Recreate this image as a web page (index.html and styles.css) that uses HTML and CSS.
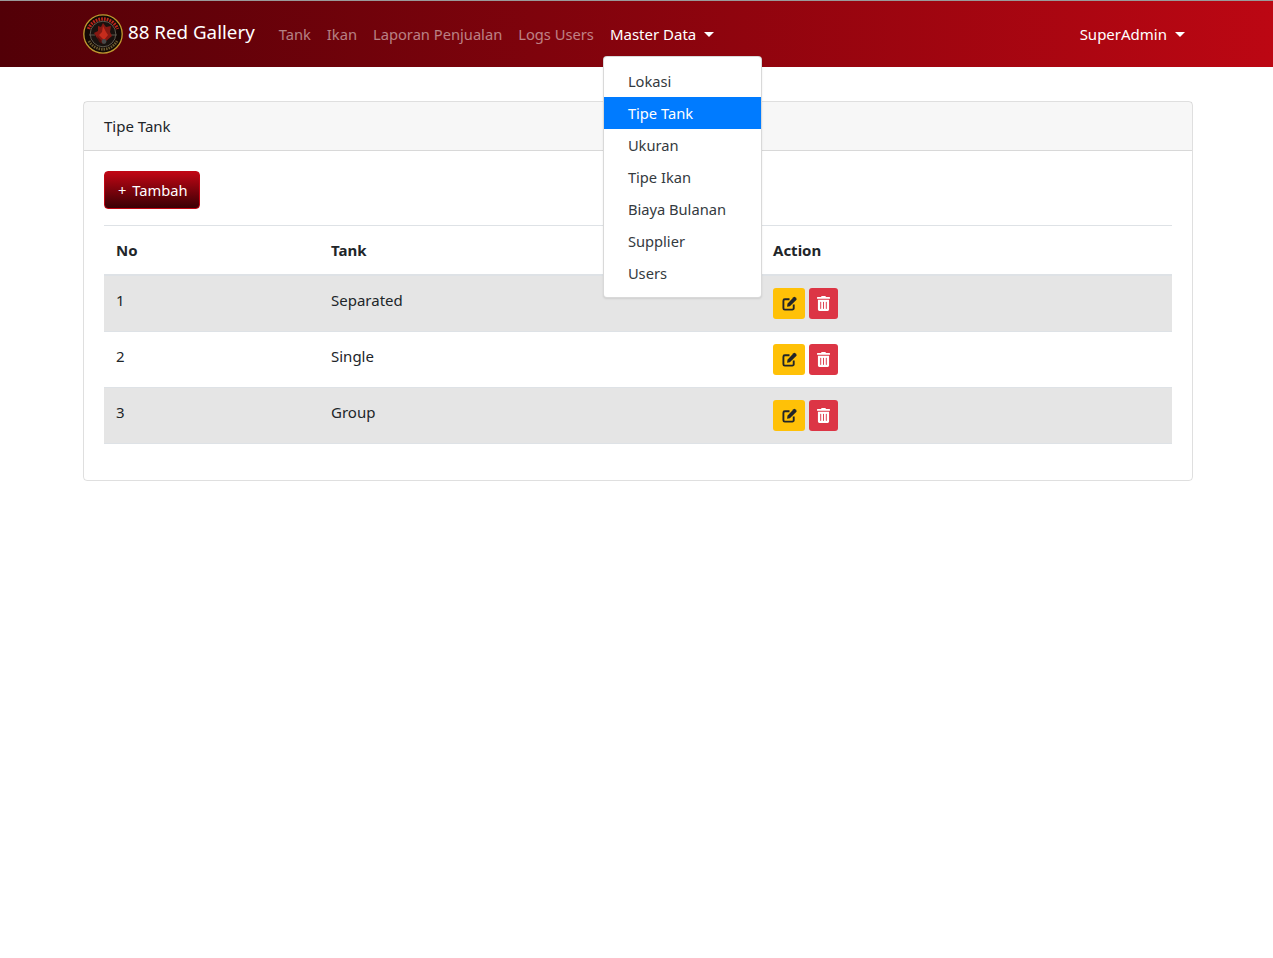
FILE: index.html
```html
<!DOCTYPE html>
<html lang="en">
<head>
    <meta charset="UTF-8">
    <title>Tipe Tank</title>
    <link rel="stylesheet" href="styles.css">
</head>
<body>
    <nav class="navbar">
        <a class="brand" href="#">
            <svg class="brand-logo" viewBox="0 0 40 40">
                <circle cx="20" cy="20" r="19.2" fill="#120805" stroke="#c09a30" stroke-width="1.300"/>
                <path d="M5.500 15a15.500 15.500 0 0 1 29 0" fill="none" stroke="#b8261c" stroke-width="3.400" stroke-dasharray="1.800 1"/>
                <path d="M6 27a16 16 0 0 0 28 0" fill="none" stroke="#6a5a30" stroke-width="2.800" stroke-dasharray="1.500 1"/>
                <circle cx="20" cy="20" r="12.800" fill="#19120f" stroke="#5c574c" stroke-width="1"/>
                <path d="M6 21h6M28 21h6" stroke="#5c574c" stroke-width="1.200"/>
                <path d="M20 9l3 4 5-1-1 6 2 4-6 5-4 1-5-4-3-5 4-2 0-5 3 1z" fill="#861812"/>
                <path d="M20 12l3 6 2 3-4 5-5-5 3-3z" fill="#c62c1c"/>
                <path d="M14 22l5 5 3-2-2 5-4-2z" fill="#500d0a"/>
                <circle cx="21" cy="27.500" r="2.400" fill="#484848"/>
            </svg>
            <span class="brand-name">88 Red Gallery</span>
        </a>
        <ul class="nav-list">
            <li><a class="nav-link" href="#">Tank</a></li>
            <li><a class="nav-link" href="#">Ikan</a></li>
            <li><a class="nav-link" href="#">Laporan Penjualan</a></li>
            <li><a class="nav-link" href="#">Logs Users</a></li>
            <li class="dropdown">
                <a class="nav-link active caret" href="#">Master Data</a>
                <div class="dropdown-menu">
                    <a class="dropdown-item" href="#">Lokasi</a>
                    <a class="dropdown-item selected" href="#">Tipe Tank</a>
                    <a class="dropdown-item" href="#">Ukuran</a>
                    <a class="dropdown-item" href="#">Tipe Ikan</a>
                    <a class="dropdown-item" href="#">Biaya Bulanan</a>
                    <a class="dropdown-item" href="#">Supplier</a>
                    <a class="dropdown-item" href="#">Users</a>
                </div>
            </li>
        </ul>
        <a class="nav-link active caret" href="#">SuperAdmin</a>
    </nav>

    <main class="container">
        <section class="card">
            <div class="card-header">Tipe Tank</div>
            <div class="card-body">
                <a class="btn-add" href="#">+ Tambah</a>
                <table class="table">
                    <thead>
                        <tr>
                            <th class="col-no">No</th>
                            <th class="col-tank">Tank</th>
                            <th>Action</th>
                        </tr>
                    </thead>
                    <tbody>
                        <tr class="odd">
                            <td>1</td>
                            <td>Separated</td>
                            <td>
                                <div class="actions">
                                    <a class="btn-icon edit" href="#"><svg viewBox="0 0 16 16"><use href="#ico-edit"/></svg></a>
                                    <a class="btn-icon del" href="#"><svg viewBox="0 0 448 512"><use href="#ico-trash"/></svg></a>
                                </div>
                            </td>
                        </tr>
                        <tr>
                            <td>2</td>
                            <td>Single</td>
                            <td>
                                <div class="actions">
                                    <a class="btn-icon edit" href="#"><svg viewBox="0 0 16 16"><use href="#ico-edit"/></svg></a>
                                    <a class="btn-icon del" href="#"><svg viewBox="0 0 448 512"><use href="#ico-trash"/></svg></a>
                                </div>
                            </td>
                        </tr>
                        <tr class="odd">
                            <td>3</td>
                            <td>Group</td>
                            <td>
                                <div class="actions">
                                    <a class="btn-icon edit" href="#"><svg viewBox="0 0 16 16"><use href="#ico-edit"/></svg></a>
                                    <a class="btn-icon del" href="#"><svg viewBox="0 0 448 512"><use href="#ico-trash"/></svg></a>
                                </div>
                            </td>
                        </tr>
                    </tbody>
                </table>
            </div>
        </section>
    </main>

    <svg class="sprites" width="0" height="0">
        <symbol id="ico-edit" viewBox="0 0 16 16">
            <path fill="none" stroke="currentColor" stroke-width="2" stroke-linejoin="round" d="M8 3.500H3a1.500 1.500 0 0 0-1.500 1.500v8a1.500 1.500 0 0 0 1.500 1.500h8a1.500 1.500 0 0 0 1.500-1.500V9"/>
            <path fill="currentColor" d="M12.300 1.300a1.300 1.300 0 0 1 1.800 0l1.100 1.100a1.300 1.300 0 0 1 0 1.800L8.400 11l-3 .4.400-3.100z"/>
        </symbol>
        <symbol id="ico-trash" viewBox="0 0 448 512">
            <path fill="currentColor" d="M32 464a48 48 0 0 0 48 48h288a48 48 0 0 0 48-48V128H32zm272-256a16 16 0 0 1 32 0v224a16 16 0 0 1-32 0zm-96 0a16 16 0 0 1 32 0v224a16 16 0 0 1-32 0zm-96 0a16 16 0 0 1 32 0v224a16 16 0 0 1-32 0zM432 32H312l-9.400-18.700A24 24 0 0 0 281.100 0H166.800a23.720 23.720 0 0 0-21.400 13.300L136 32H16A16 16 0 0 0 0 48v32a16 16 0 0 0 16 16h416a16 16 0 0 0 16-16V48a16 16 0 0 0-16-16z"/>
        </symbol>
    </svg>
</body>
</html>
```

FILE: styles.css
```css
* {
    box-sizing: border-box;
}

body {
    margin: 0;
    background: #fff;
    color: #212529;
    font-family: "Noto Sans", "Open Sans", sans-serif;
    font-size: 15px;
    line-height: 24px;
}

a {
    text-decoration: none;
}

.sprites {
    position: absolute;
}

.navbar {
    display: flex;
    align-items: center;
    height: 67px;
    padding: 0 80px 0 83px;
    background: linear-gradient(to right, #520007, #bc0713);
    border-top: 1px solid #9a9a9a;
}

.brand {
    display: flex;
    align-items: center;
    gap: 5px;
    margin-right: 16px;
    color: #fff;
    font-size: 18.750px;
}

.brand-name {
    padding-bottom: 4px;
}

.brand-logo {
    width: 40px;
    height: 40px;
}

.nav-list {
    display: flex;
    flex: 1;
    margin: 0;
    padding: 0;
    list-style: none;
}

.nav-link {
    display: block;
    padding: 8px;
    color: rgba(255, 255, 255, 0.5);
    font-size: 14.700px;
}

.nav-link.active {
    color: #fff;
    font-size: 15px;
}

.caret::after {
    content: "";
    display: inline-block;
    margin-left: 8px;
    vertical-align: 3px;
    border-top: 5px solid;
    border-left: 5px solid transparent;
    border-right: 5px solid transparent;
}

.dropdown {
    position: relative;
}

.dropdown-menu {
    position: absolute;
    top: 42px;
    left: 1px;
    z-index: 10;
    width: 159px;
    padding: 8px 0;
    background: #fff;
    border: 1px solid rgba(0, 0, 0, 0.15);
    border-radius: 4px;
    box-shadow: 0 1px 2px rgba(0, 0, 0, 0.1);
}

.dropdown-item {
    display: block;
    height: 32px;
    padding: 4px 24px;
    color: #343a40;
    font-size: 14.700px;
}

.dropdown-item.selected {
    background: #007bff;
    color: #fff;
}

.container {
    padding: 34px 80px 0 83px;
}

.card {
    border: 1px solid rgba(0, 0, 0, 0.125);
    border-radius: 4px;
}

.card-header {
    height: 49px;
    padding: 12px 20px;
    background: rgba(0, 0, 0, 0.03);
    border-bottom: 1px solid rgba(0, 0, 0, 0.125);
}

.card-body {
    padding: 20px 20px 36px;
}

.btn-add {
    display: inline-block;
    height: 38px;
    padding: 6px 11px 6px 13px;
    border: 1px solid #c00614;
    border-radius: 4px;
    background: linear-gradient(to bottom, #c00614, #3a0005);
    color: #fff;
    font-size: 14.700px;
    word-spacing: 2px;
}

.table {
    width: 100%;
    margin-top: 16px;
    border-collapse: collapse;
}

.table th {
    height: 49px;
    padding: 12px;
    text-align: left;
    border-top: 1px solid #dee2e6;
    border-bottom: 2px solid #dee2e6;
}

.table td {
    height: 56px;
    padding: 12px;
    vertical-align: top;
    border-top: 1px solid #dee2e6;
}

.table tbody tr:last-child td {
    border-bottom: 1px solid #dee2e6;
}

.table .odd {
    background: #e5e5e5;
}

.col-no {
    width: 215px;
}

.col-tank {
    width: 442px;
}

.actions {
    display: flex;
    gap: 4px;
}

.btn-icon {
    display: flex;
    align-items: center;
    justify-content: center;
    height: 31px;
    border-radius: 3px;
}

.edit {
    width: 32px;
    background: #ffc107;
    color: #212529;
}

.edit svg {
    width: 15px;
    height: 15px;
}

.del {
    width: 29px;
    background: #dc3545;
    color: #fff;
}

.del svg {
    width: 13px;
    height: 15px;
}
```
